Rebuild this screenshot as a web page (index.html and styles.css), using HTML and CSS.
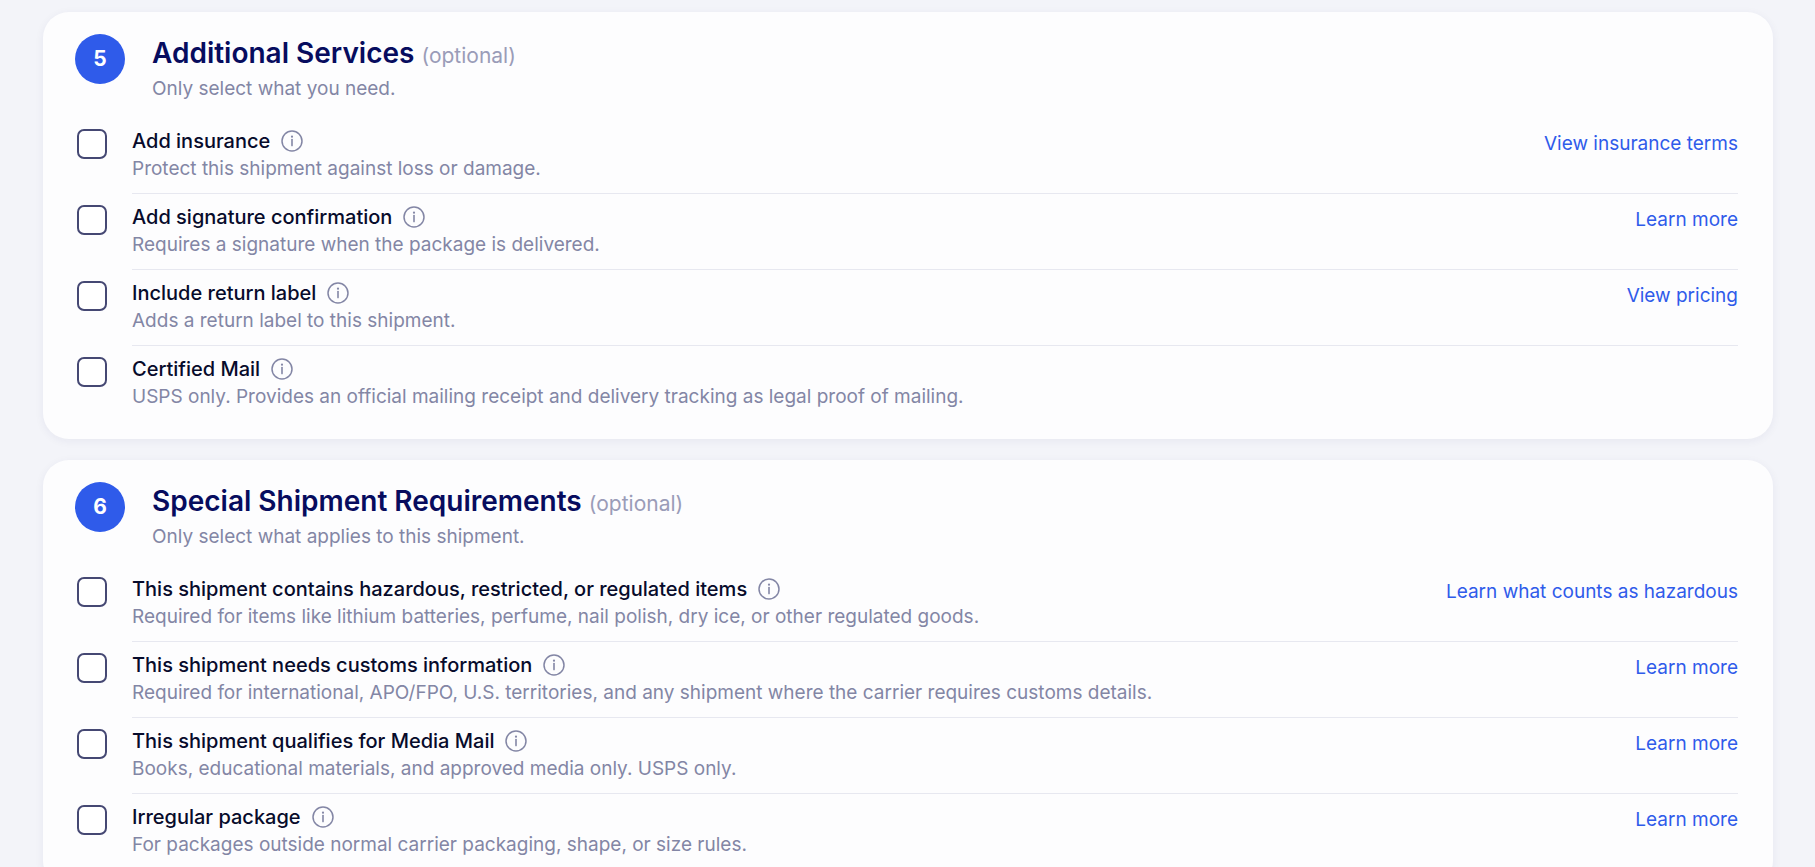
FILE: index.html
```
<!DOCTYPE html>
<html lang="en">
<head>
    <meta charset="UTF-8">
    <meta name="viewport" content="width=device-width, initial-scale=1.0">
    <title>Create shipment</title>
    <link rel="stylesheet" href="styles.css">
</head>
<body>
    <!-- shared info icon -->
    <svg class="sprite" aria-hidden="true">
        <symbol id="icon-info" viewBox="0 0 22 22">
            <circle cx="11" cy="11" r="10" fill="none" stroke="currentColor" stroke-width="1.5"/>
            <path d="M11 9.6v6" fill="none" stroke="currentColor" stroke-width="1.6" stroke-linecap="round"/>
            <circle cx="11" cy="6.7" r="1.1" fill="currentColor"/>
        </symbol>
    </svg>

    <main class="page">
        <section class="card">
            <header class="card-header">
                <span class="step">5</span>
                <div>
                    <h2>Additional Services <span class="optional">(optional)</span></h2>
                    <p class="subtitle">Only select what you need.</p>
                </div>
            </header>
            <ul class="options">
                <li class="option">
                    <input type="checkbox" id="insurance">
                    <div class="option-body">
                        <div class="option-text">
                            <div class="option-title">
                                <label for="insurance">Add insurance</label>
                                <button type="button" class="info" aria-label="About insurance"><svg><use href="#icon-info"/></svg></button>
                            </div>
                            <p>Protect this shipment against loss or damage.</p>
                        </div>
                        <a href="#">View insurance terms</a>
                    </div>
                </li>
                <li class="option">
                    <input type="checkbox" id="signature">
                    <div class="option-body">
                        <div class="option-text">
                            <div class="option-title">
                                <label for="signature">Add signature confirmation</label>
                                <button type="button" class="info" aria-label="About signature confirmation"><svg><use href="#icon-info"/></svg></button>
                            </div>
                            <p>Requires a signature when the package is delivered.</p>
                        </div>
                        <a href="#">Learn more</a>
                    </div>
                </li>
                <li class="option">
                    <input type="checkbox" id="return-label">
                    <div class="option-body">
                        <div class="option-text">
                            <div class="option-title">
                                <label for="return-label">Include return label</label>
                                <button type="button" class="info" aria-label="About return labels"><svg><use href="#icon-info"/></svg></button>
                            </div>
                            <p>Adds a return label to this shipment.</p>
                        </div>
                        <a href="#">View pricing</a>
                    </div>
                </li>
                <li class="option">
                    <input type="checkbox" id="certified">
                    <div class="option-body">
                        <div class="option-text">
                            <div class="option-title">
                                <label for="certified">Certified Mail</label>
                                <button type="button" class="info" aria-label="About Certified Mail"><svg><use href="#icon-info"/></svg></button>
                            </div>
                            <p>USPS only. Provides an official mailing receipt and delivery tracking as legal proof of mailing.</p>
                        </div>
                    </div>
                </li>
            </ul>
        </section>

        <section class="card">
            <header class="card-header">
                <span class="step">6</span>
                <div>
                    <h2>Special Shipment Requirements <span class="optional">(optional)</span></h2>
                    <p class="subtitle">Only select what applies to this shipment.</p>
                </div>
            </header>
            <ul class="options">
                <li class="option">
                    <input type="checkbox" id="hazardous">
                    <div class="option-body">
                        <div class="option-text">
                            <div class="option-title">
                                <label for="hazardous">This shipment contains hazardous, restricted, or regulated items</label>
                                <button type="button" class="info" aria-label="About hazardous items"><svg><use href="#icon-info"/></svg></button>
                            </div>
                            <p>Required for items like lithium batteries, perfume, nail polish, dry ice, or other regulated goods.</p>
                        </div>
                        <a href="#">Learn what counts as hazardous</a>
                    </div>
                </li>
                <li class="option">
                    <input type="checkbox" id="customs">
                    <div class="option-body">
                        <div class="option-text">
                            <div class="option-title">
                                <label for="customs">This shipment needs customs information</label>
                                <button type="button" class="info" aria-label="About customs information"><svg><use href="#icon-info"/></svg></button>
                            </div>
                            <p>Required for international, APO/FPO, U.S. territories, and any shipment where the carrier requires customs details.</p>
                        </div>
                        <a href="#">Learn more</a>
                    </div>
                </li>
                <li class="option">
                    <input type="checkbox" id="media-mail">
                    <div class="option-body">
                        <div class="option-text">
                            <div class="option-title">
                                <label for="media-mail">This shipment qualifies for Media Mail</label>
                                <button type="button" class="info" aria-label="About Media Mail"><svg><use href="#icon-info"/></svg></button>
                            </div>
                            <p>Books, educational materials, and approved media only. USPS only.</p>
                        </div>
                        <a href="#">Learn more</a>
                    </div>
                </li>
                <li class="option">
                    <input type="checkbox" id="irregular">
                    <div class="option-body">
                        <div class="option-text">
                            <div class="option-title">
                                <label for="irregular">Irregular package</label>
                                <button type="button" class="info" aria-label="About irregular packages"><svg><use href="#icon-info"/></svg></button>
                            </div>
                            <p>For packages outside normal carrier packaging, shape, or size rules.</p>
                        </div>
                        <a href="#">Learn more</a>
                    </div>
                </li>
            </ul>
        </section>
    </main>
</body>
</html>
```

FILE: styles.css
```
* {
    box-sizing: border-box;
}

body {
    margin: 0;
    background: #f3f4f9;
    color: #070b2b;
    font-family: Inter, "Liberation Sans", sans-serif;
    font-size: 19px;
    line-height: 28px;
}

h2, p, ul {
    margin: 0;
    padding: 0;
}

.sprite {
    display: none;
}

.page {
    display: flex;
    flex-direction: column;
    gap: 21px;
    padding: 12px 42px 21px 43px;
}

.card {
    background: #fdfdfe;
    border-radius: 26px;
    padding: 22px 35px 18px 32px;
    box-shadow: 0 2px 10px rgba(30, 40, 110, 0.06);
}

.card-header {
    display: flex;
    align-items: flex-start;
    gap: 27px;
}

.step {
    display: flex;
    align-items: center;
    justify-content: center;
    width: 50px;
    height: 50px;
    border-radius: 50%;
    background: #2f5bea;
    color: #fff;
    font-size: 21px;
    font-weight: 700;
}

h2 {
    color: #070c5e;
    font-size: 28px;
    font-weight: 600;
    line-height: 38px;
}

.optional {
    color: #9a9cb8;
    font-size: 21px;
    font-weight: 400;
}

.subtitle {
    color: #8386a5;
}

.options {
    list-style: none;
    margin-top: 15px;
}

.option {
    display: flex;
    gap: 25px;
    padding-left: 2px;
}

.option input {
    appearance: none;
    flex: none;
    width: 30px;
    height: 30px;
    margin: 11px 0 0;
    border: 2px solid #454873;
    border-radius: 7px;
    background: #fff;
    cursor: pointer;
}

.option input:checked {
    background: #2f5bea;
    border-color: #2f5bea;
}

.option-body {
    display: flex;
    flex: 1;
    justify-content: space-between;
    gap: 24px;
    padding: 9px 0 10px;
    border-bottom: 1px solid #e7e8f0;
}

.option:last-child .option-body {
    border-bottom: none;
}

.option-title {
    display: flex;
    align-items: center;
    gap: 11px;
    font-size: 20px;
    font-weight: 500;
}

.option-text p {
    color: #8386a5;
}

.info {
    display: flex;
    padding: 0;
    border: none;
    background: none;
    color: #8386a5;
    cursor: pointer;
}

.info svg {
    width: 22px;
    height: 22px;
}

.option a {
    margin-top: 3px;
    color: #2f5bea;
    text-decoration: none;
    white-space: nowrap;
}

.option a:hover {
    text-decoration: underline;
}
```
